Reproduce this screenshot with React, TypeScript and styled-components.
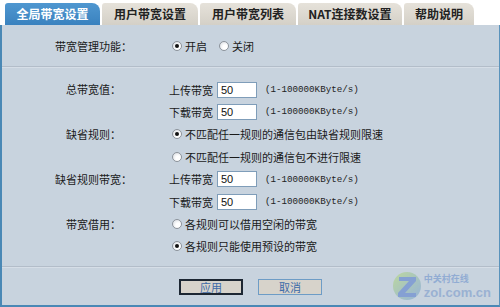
import React from 'react'
import styled, { createGlobalStyle } from 'styled-components'

const tabs = [
  { title: '全局带宽设置', width: 95 },
  { title: '用户带宽设置', width: 96 },
  { title: '用户带宽列表', width: 96 },
  { title: 'NAT连接数设置', width: 104 },
  { title: '帮助说明', width: 70 },
]

const App = () => {
  return (
    <Page>
      <GlobalStyle />
      <TabBar>
        {tabs.map((t, i) => (
          <Tab key={t.title} active={i === 0} w={t.width}>
            {t.title}
          </Tab>
        ))}
      </TabBar>
      <Panel>
        <Section pad="10px 0 9px 16px">
          <Group>
            <Label>带宽管理功能：</Label>
            <Lines>
              <Line>
                <Choice>
                  <Radio checked />
                  开启
                </Choice>
                <Choice gap={12}>
                  <Radio />
                  关闭
                </Choice>
              </Line>
            </Lines>
          </Group>
        </Section>
        <Divider />
        <Section pad="10px 0 8px 16px">
          <Group>
            <Label>总带宽值：</Label>
            <Lines>
              <RateLine name="上传带宽" />
              <RateLine name="下载带宽" />
            </Lines>
          </Group>
          <Group>
            <Label>缺省规则：</Label>
            <Lines>
              <Line>
                <Choice>
                  <Radio checked />
                  不匹配任一规则的通信包由缺省规则限速
                </Choice>
              </Line>
              <Line>
                <Choice>
                  <Radio />
                  不匹配任一规则的通信包不进行限速
                </Choice>
              </Line>
            </Lines>
          </Group>
          <Group>
            <Label>缺省规则带宽：</Label>
            <Lines>
              <RateLine name="上传带宽" />
              <RateLine name="下载带宽" />
            </Lines>
          </Group>
          <Group>
            <Label>带宽借用：</Label>
            <Lines>
              <Line>
                <Choice>
                  <Radio />
                  各规则可以借用空闲的带宽
                </Choice>
              </Line>
              <Line>
                <Choice>
                  <Radio checked />
                  各规则只能使用预设的带宽
                </Choice>
              </Line>
            </Lines>
          </Group>
        </Section>
        <Divider />
        <Buttons>
          <Button focused>应用</Button>
          <Button>取消</Button>
        </Buttons>
        <Watermark>
          <svg width="30" height="30" viewBox="0 0 30 30">
            <defs>
              <linearGradient id="zg" x1="0" y1="0" x2="1" y2="1">
                <stop offset="0" stopColor="#b9d98a" />
                <stop offset="1" stopColor="#86a9d8" />
              </linearGradient>
            </defs>
            <circle cx="15" cy="15" r="14" fill="url(#zg)" />
            <polygon points="7,6 24,6 24,10 13,22 24,22 24,26 6,26 6,22 17,10 7,10" fill="#6f8fd0" />
          </svg>
          <WatermarkText>
            <MarkCn>中关村在线</MarkCn>
            <MarkEn>zol.com.cn</MarkEn>
          </WatermarkText>
        </Watermark>
      </Panel>
    </Page>
  )
}

const RateLine = ({ name }: { name: string }) => (
  <Line>
    <span>{name}</span>
    <Input defaultValue="50" />
    <Range>(1-100000KByte/s)</Range>
  </Line>
)

const GlobalStyle = createGlobalStyle`
  body {
    margin: 0;
    background: #ffffff;
    font-family: "Noto Sans CJK SC", "Noto Sans", sans-serif;
  }
`

const Page = styled.div`
  width: 500px;
  height: 307px;
  display: flex;
  flex-direction: column;
  background: #ffffff;
`

const TabBar = styled.div`
  box-sizing: border-box;
  height: 25px;
  padding: 3px 0 0 5px;
  display: flex;
  align-items: flex-end;
  gap: 2px;
`

const Tab = styled.div<{ active?: boolean; w: number }>`
  box-sizing: border-box;
  width: ${({ w }) => w}px;
  height: 22px;
  line-height: 22px;
  text-align: center;
  font-size: 12px;
  font-weight: bold;
  border-radius: 3px 8px 0 0;
  color: ${({ active }) => (active ? '#ffffff' : '#222222')};
  background: ${({ active }) =>
    active
      ? 'linear-gradient(#4f97d0, #3a82bf)'
      : 'linear-gradient(#e6e2da, #d4d0c7)'};
`

const Panel = styled.div`
  position: relative;
  flex: 1;
  display: flex;
  flex-direction: column;
  background: #c8d3de;
  border-left: 2px solid #4a88b5;
  border-right: 1px solid #5a93bc;
  border-bottom: 2px solid #4a88b5;
`

const Section = styled.div<{ pad: string }>`
  padding: ${({ pad }) => pad};
  display: flex;
  flex-direction: column;
`

const Divider = styled.div`
  height: 1px;
  background: #b3bdc9;
  border-bottom: 1px solid #d6dee7;
`

const Group = styled.div`
  display: grid;
  grid-template-columns: 151px 1fr;
`

const Label = styled.div`
  text-align: center;
  font-size: 11px;
  line-height: 22.4px;
  color: #1a1a1a;
`

const Lines = styled.div`
  display: flex;
  flex-direction: column;
`

const Line = styled.div`
  height: 22.4px;
  display: flex;
  align-items: center;
  font-size: 11px;
  color: #1a1a1a;
  white-space: nowrap;
`

const Choice = styled.label<{ gap?: number }>`
  display: flex;
  align-items: center;
  margin-left: ${({ gap }) => (gap ? `${gap}px` : '3px')};
`

const Radio = styled.span<{ checked?: boolean }>`
  position: relative;
  box-sizing: border-box;
  width: 10px;
  height: 10px;
  margin-right: 3px;
  border-radius: 50%;
  border: 1px solid #8d939b;
  background: radial-gradient(circle at 65% 65%, #ffffff 30%, #d3d8de 100%);
  &::after {
    content: '';
    display: ${({ checked }) => (checked ? 'block' : 'none')};
    position: absolute;
    left: 2px;
    top: 2px;
    width: 4px;
    height: 4px;
    border-radius: 50%;
    background: #111111;
  }
`

const Input = styled.input`
  box-sizing: border-box;
  width: 40px;
  height: 16px;
  margin-left: 4px;
  padding: 0 3px;
  border: 1px solid #7f9db9;
  background: #ffffff;
  font-family: "Liberation Sans", sans-serif;
  font-size: 11px;
  color: #111111;
  outline: none;
`

const Range = styled.span`
  margin-left: 8px;
  font-family: "Liberation Mono", monospace;
  font-size: 9.2px;
  color: #222222;
`

const Buttons = styled.div`
  display: flex;
  justify-content: center;
  gap: 15px;
  padding-top: 11px;
`

const Button = styled.button<{ focused?: boolean }>`
  box-sizing: border-box;
  width: 64px;
  height: 16px;
  padding: 0;
  background: #d7d3cb;
  border: ${({ focused }) => (focused ? '2px solid #1d2733' : '1px solid #6d9cc6')};
  font-family: "Noto Sans CJK SC", sans-serif;
  font-size: 11px;
  line-height: 12px;
  color: #3d6aa8;
`

const Watermark = styled.div`
  position: absolute;
  right: 8px;
  bottom: 4px;
  display: flex;
  align-items: center;
  gap: 2px;
  opacity: 0.75;
`

const WatermarkText = styled.div`
  display: flex;
  flex-direction: column;
  gap: 2px;
`

const MarkCn = styled.span`
  font-size: 9px;
  line-height: 10px;
  font-weight: bold;
  color: #7f9fd0;
`

const MarkEn = styled.span`
  font-family: "Liberation Sans", sans-serif;
  font-size: 13px;
  line-height: 13px;
  font-weight: bold;
  color: #8ba6cf;
`

export default App
